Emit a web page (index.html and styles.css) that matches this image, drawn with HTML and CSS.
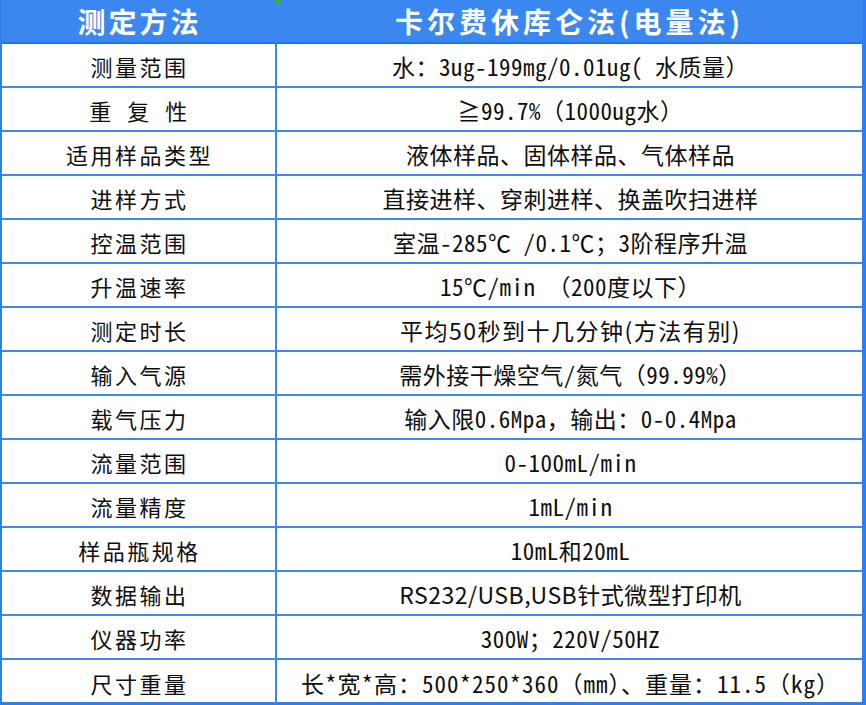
FILE: index.html
```html
<!DOCTYPE html>
<html lang="zh-CN">
<head>
<meta charset="utf-8">
<title>卡尔费休库仑法</title>
<link rel="stylesheet" href="styles.css">
</head>
<body>
<div class="sheet">
  <div class="cell head key">测定方法<span class="flag"></span></div>
  <div class="cell head val">卡尔费休库仑法(电量法)</div>

  <div class="cell key">测量范围</div>
  <div class="cell val">水：3ug-199mg/0.01ug( 水质量）</div>

  <div class="cell key">重 复 性</div>
  <div class="cell val">≧99.7%（1000ug水）</div>

  <div class="cell key">适用样品类型</div>
  <div class="cell val">液体样品、固体样品、气体样品</div>

  <div class="cell key">进样方式</div>
  <div class="cell val">直接进样、穿刺进样、换盖吹扫进样</div>

  <div class="cell key">控温范围</div>
  <div class="cell val">室温-285℃ /0.1℃；3阶程序升温</div>

  <div class="cell key">升温速率</div>
  <div class="cell val">15℃/min （200度以下）</div>

  <div class="cell key">测定时长</div>
  <div class="cell val prop wide">平均50秒到十几分钟(方法有别)</div>

  <div class="cell key">输入气源</div>
  <div class="cell val">需外接干燥空气/氮气（99.99%）</div>

  <div class="cell key">载气压力</div>
  <div class="cell val">输入限0.6Mpa，输出：0-0.4Mpa</div>

  <div class="cell key">流量范围</div>
  <div class="cell val">0-100mL/min</div>

  <div class="cell key">流量精度</div>
  <div class="cell val">1mL/min</div>

  <div class="cell key">样品瓶规格</div>
  <div class="cell val">10mL和20mL</div>

  <div class="cell key">数据输出</div>
  <div class="cell val prop">RS232/USB,USB针式微型打印机</div>

  <div class="cell key">仪器功率</div>
  <div class="cell val">300W；220V/50HZ</div>

  <div class="cell key last">尺寸重量</div>
  <div class="cell val last loose">长*宽*高：500*250*360（mm）、重量：11.5（kg）</div>
</div>
</body>
</html>
```

FILE: styles.css
```css
html, body {
  margin: 0;
  padding: 0;
  background: #ffffff;
}

.sheet {
  width: 866px;
  height: 705px;
  box-sizing: border-box;
  display: grid;
  grid-template-columns: 275px 1fr;
  grid-auto-rows: 44px;
  border-left: 2px solid #2f80ee;
  border-right: 4px solid #2f80ee;
  border-bottom: 3px solid #2f80ee;
  font-family: "Noto Sans Mono CJK SC", "Noto Sans CJK SC", sans-serif;
  color: #0d0d0d;
}

.cell {
  box-sizing: border-box;
  display: flex;
  align-items: center;
  justify-content: center;
  border-bottom: 2px solid #3a8af0;
  font-size: 23px;
  white-space: nowrap;
  padding-top: 1px;
}

.key {
  border-right: 2px solid #3a8af0;
  font-size: 22px;
  letter-spacing: 2.5px;
  padding-left: 2px;
  position: relative;
}

.val {
  padding-left: 2px;
  letter-spacing: 0.5px;
}

.val.prop {
  font-family: "Noto Sans CJK SC", sans-serif;
}

.val.wide {
  letter-spacing: 1.5px;
}

.val.loose {
  letter-spacing: 1px;
}

.head {
  background: #3a87ef;
  color: #ffffff;
  font-family: "Noto Sans CJK SC", sans-serif;
  font-weight: 700;
  font-size: 28px;
  letter-spacing: 3px;
  border-bottom: 2px solid #1f74ea;
  border-right-color: #3a87ef;
  padding-top: 0;
}

.head.val {
  letter-spacing: 4px;
  padding-left: 0;
}

.cell.last {
  border-bottom: none;
}

.flag {
  position: absolute;
  right: -4px;
  top: 0;
  width: 0;
  height: 0;
  border-top: 6px solid #3fae3a;
  border-left: 6px solid transparent;
}
```
